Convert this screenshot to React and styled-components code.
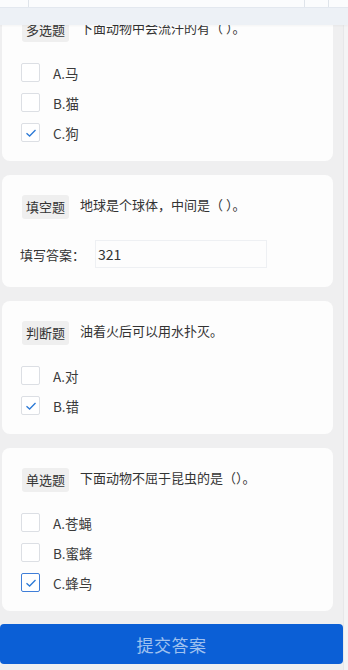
import React from "react";
import styled, { createGlobalStyle } from "styled-components";

const Global = createGlobalStyle`
  html, body { margin: 0; padding: 0; background: #efeff0; }
  body { font-family: "Noto Sans CJK SC", "Noto Sans", sans-serif; color: #333; }
  * { box-sizing: border-box; }
`;

const TopBar = styled.div`
  position: fixed;
  top: 0;
  left: 0;
  right: 0;
  height: 25px;
  z-index: 10;
  display: flex;
  flex-direction: column;
`;

const TopStrip = styled.div`
  height: 7px;
  background: #fbfcfd;
  display: grid;
  grid-template-columns: 29px 1fr 24px 19px;
  & > span { border-right: 1px solid #dfe4ea; }
  & > span:last-child { border-right: none; }
`;

const Band = styled.div`
  flex: 1;
  background: #edf1f6;
  border-top: 1px solid #e3e8ef;
  box-shadow: 0 1px 2px rgba(0, 0, 0, 0.04);
`;

const Scrollbar = styled.div`
  position: fixed;
  top: 25px;
  right: 0;
  width: 5px;
  bottom: 0;
  background: #f4f4f5;
  border-left: 1px solid #e7e7e9;
  z-index: 5;
`;

const Main = styled.main`
  margin-top: -2px;
  padding: 0 15px 5px 2px;
  display: flex;
  flex-direction: column;
  gap: 14px;
`;

const Card = styled.section`
  background: #fdfdfd;
  border-radius: 8px;
  padding: 20px 19px 19px 20px;
`;

const Header = styled.div`
  display: flex;
  align-items: flex-start;
  gap: 11px;
  margin-bottom: 21px;
`;

const Tag = styled.span`
  flex: none;
  height: 24px;
  line-height: 24px;
  padding: 0 4px;
  background: #efefef;
  border-radius: 3px;
  font-size: 13px;
  color: #333;
`;

const Question = styled.div`
  font-size: 13px;
  line-height: 20px;
  color: #333;
`;

const Options = styled.div`
  display: flex;
  flex-direction: column;
  gap: 11px;
`;

const Option = styled.label`
  display: flex;
  align-items: center;
  height: 19px;
  gap: 13px;
  font-size: 13.5px;
  color: #3a3a3a;
`;

const Box = styled.span`
  flex: none;
  width: 19px;
  height: 19px;
  margin-left: -1px;
  border: 1px solid ${(p) => (p.$active ? "#3f7ed8" : "#dcdfe4")};
  border-radius: 2px;
  background: #fff;
  display: flex;
  align-items: center;
  justify-content: center;
`;

const AnswerRow = styled.div`
  display: flex;
  align-items: center;
  gap: 10px;
  margin-left: -2px;
`;

const AnswerLabel = styled.span`
  font-size: 13px;
  color: #333;
  width: 65px;
`;

const Input = styled.div`
  width: 172px;
  height: 28px;
  border: 1px solid #eef0f3;
  display: flex;
  align-items: center;
  padding-left: 2px;
  font-size: 14px;
  color: #333;
`;

const Submit = styled.button`
  margin: -1px -10px 0 -2px;
  height: 40px;
  border: none;
  border-radius: 4px;
  background: #0b5fd6;
  color: #9fc1ef;
  font-family: inherit;
  font-size: 17px;
  letter-spacing: 0.5px;
`;

const Check = () => (
  <svg width="14" height="14" viewBox="0 0 14 14">
    <path d="M2.5 7.2 L5.6 10 L11.5 4" fill="none" stroke="#2b79d6" strokeWidth="1.3" />
  </svg>
);

const OptionItem = ({ label, checked, active }) => (
  <Option>
    <Box $active={active}>{checked && <Check />}</Box>
    <span>{label}</span>
  </Option>
);

export default function App() {
  return (
    <>
      <Global />
      <TopBar>
        <TopStrip>
          <span />
          <span />
          <span />
          <span />
        </TopStrip>
        <Band />
      </TopBar>
      <Scrollbar />
      <Main>
        <Card>
          <Header>
            <Tag>多选题</Tag>
            <Question>下面动物中会流汗的有（ ）。</Question>
          </Header>
          <Options>
            <OptionItem label="A.马" />
            <OptionItem label="B.猫" />
            <OptionItem label="C.狗" checked />
          </Options>
        </Card>
        <Card>
          <Header>
            <Tag>填空题</Tag>
            <Question>地球是个球体，中间是（ ）。</Question>
          </Header>
          <AnswerRow>
            <AnswerLabel>填写答案：</AnswerLabel>
            <Input>321</Input>
          </AnswerRow>
        </Card>
        <Card>
          <Header>
            <Tag>判断题</Tag>
            <Question>油着火后可以用水扑灭。</Question>
          </Header>
          <Options>
            <OptionItem label="A.对" />
            <OptionItem label="B.错" checked />
          </Options>
        </Card>
        <Card>
          <Header>
            <Tag>单选题</Tag>
            <Question>下面动物不屈于昆虫的是（）。</Question>
          </Header>
          <Options>
            <OptionItem label="A.苍蝇" />
            <OptionItem label="B.蜜蜂" />
            <OptionItem label="C.蜂鸟" checked active />
          </Options>
        </Card>
        <Submit>提交答案</Submit>
      </Main>
    </>
  );
}
